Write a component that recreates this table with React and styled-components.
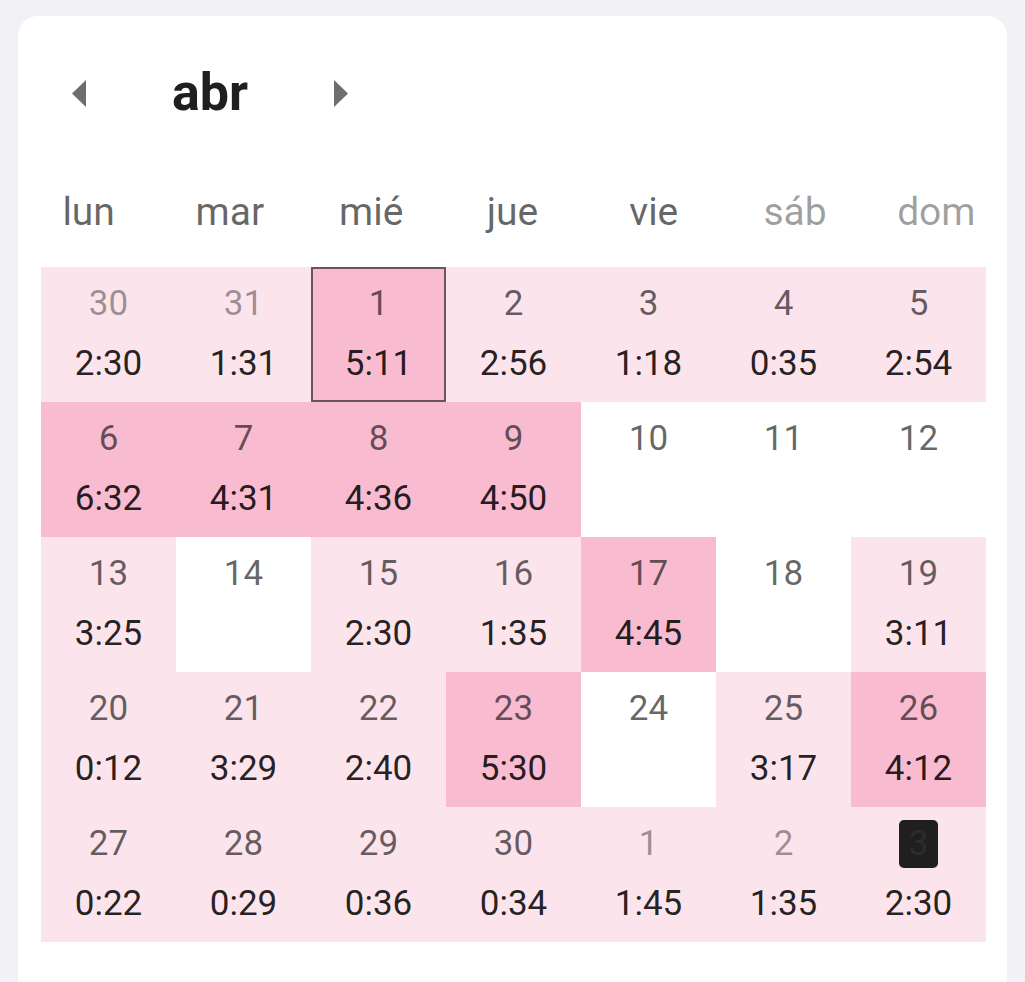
import React from "react";
import styled, { createGlobalStyle } from "styled-components";

const GlobalStyle = createGlobalStyle`
  html, body {
    margin: 0;
    padding: 0;
    background: #f2f1f6;
    overflow: hidden;
  }
  body {
    font-family: Roboto, "Noto Sans", "Liberation Sans", sans-serif;
  }
`;

const Page = styled.div`
  padding: 16px 18px 0 18px;
  height: 982px;
  box-sizing: border-box;
`;

const Card = styled.div`
  background: #ffffff;
  border-radius: 20px 20px 0 0;
  height: 100%;
  padding-top: 37px;
  box-sizing: border-box;
`;

const Header = styled.div`
  display: flex;
  align-items: center;
  height: 80px;
  padding-left: 31px;
`;

const NavButton = styled.button`
  width: 60px;
  height: 60px;
  border: none;
  background: transparent;
  padding: 0;
  display: flex;
  align-items: center;
  justify-content: center;
  cursor: pointer;
`;

const Title = styled.div`
  width: 202px;
  text-align: center;
  font-size: 52px;
  font-weight: 700;
  color: #1f1f1f;
  line-height: 60px;
`;

const WeekRow = styled.div`
  display: grid;
  grid-template-columns: repeat(7, 1fr);
  height: 80px;
  margin-top: 39px;
  align-items: center;
`;

const WeekDay = styled.div`
  text-align: center;
  font-size: 39px;
  color: ${(p) => (p.$weekend ? "rgba(0,0,0,0.38)" : "rgba(0,0,0,0.6)")};
`;

const Grid = styled.div`
  display: grid;
  grid-template-columns: repeat(7, 135px);
  grid-auto-rows: 135px;
  margin-top: 15px;
  padding-left: 23px;
`;

const bgFor = {
  light: "#fce4ec",
  dark: "#f8bbd0",
  none: "#ffffff",
};

const Cell = styled.div`
  background: ${(p) => bgFor[p.$level]};
  box-shadow: ${(p) => (p.$selected ? "inset 0 0 0 2px #6b5460" : "none")};
  display: flex;
  flex-direction: column;
  align-items: center;
  padding-top: 17px;
  box-sizing: border-box;
  font-size: 35px;
`;

const DayNum = styled.div`
  height: 40px;
  line-height: 40px;
  display: flex;
  align-items: center;
  justify-content: center;
  color: ${(p) => (p.$other ? "rgba(0,0,0,0.38)" : "rgba(0,0,0,0.6)")};
`;

const TodayBox = styled.span`
  width: 39px;
  height: 48px;
  border-radius: 5px;
  background: #1f1f1f;
  color: #2c2c2c;
  display: flex;
  align-items: center;
  justify-content: center;
  flex-shrink: 0;
`;

const Time = styled.div`
  margin-top: 20px;
  height: 40px;
  line-height: 40px;
  color: rgba(0,0,0,0.87);
`;

const Triangle = ({ dir }) => (
  <svg width="14" height="27" viewBox="0 0 14 27">
    {dir === "left" ? (
      <polygon points="14,0 14,27 0,13.5" fill="#6e6e6e" />
    ) : (
      <polygon points="0,0 0,27 14,13.5" fill="#6e6e6e" />
    )}
  </svg>
);

const weekDays = ["lun", "mar", "mié", "jue", "vie", "sáb", "dom"];

const days = [
  { d: 30, t: "2:30", l: "light", o: true },
  { d: 31, t: "1:31", l: "light", o: true },
  { d: 1, t: "5:11", l: "dark", s: true },
  { d: 2, t: "2:56", l: "light" },
  { d: 3, t: "1:18", l: "light" },
  { d: 4, t: "0:35", l: "light" },
  { d: 5, t: "2:54", l: "light" },
  { d: 6, t: "6:32", l: "dark" },
  { d: 7, t: "4:31", l: "dark" },
  { d: 8, t: "4:36", l: "dark" },
  { d: 9, t: "4:50", l: "dark" },
  { d: 10, l: "none" },
  { d: 11, l: "none" },
  { d: 12, l: "none" },
  { d: 13, t: "3:25", l: "light" },
  { d: 14, l: "none" },
  { d: 15, t: "2:30", l: "light" },
  { d: 16, t: "1:35", l: "light" },
  { d: 17, t: "4:45", l: "dark" },
  { d: 18, l: "none" },
  { d: 19, t: "3:11", l: "light" },
  { d: 20, t: "0:12", l: "light" },
  { d: 21, t: "3:29", l: "light" },
  { d: 22, t: "2:40", l: "light" },
  { d: 23, t: "5:30", l: "dark" },
  { d: 24, l: "none" },
  { d: 25, t: "3:17", l: "light" },
  { d: 26, t: "4:12", l: "dark" },
  { d: 27, t: "0:22", l: "light" },
  { d: 28, t: "0:29", l: "light" },
  { d: 29, t: "0:36", l: "light" },
  { d: 30, t: "0:34", l: "light" },
  { d: 1, t: "1:45", l: "light", o: true },
  { d: 2, t: "1:35", l: "light", o: true },
  { d: 3, t: "2:30", l: "light", today: true },
];

export default function App() {
  return (
    <>
      <GlobalStyle />
      <Page>
        <Card>
          <Header>
            <NavButton aria-label="anterior">
              <Triangle dir="left" />
            </NavButton>
            <Title>abr</Title>
            <NavButton aria-label="siguiente">
              <Triangle dir="right" />
            </NavButton>
          </Header>
          <WeekRow>
            {weekDays.map((w, i) => (
              <WeekDay key={w} $weekend={i >= 5}>
                {w}
              </WeekDay>
            ))}
          </WeekRow>
          <Grid>
            {days.map((c, i) => (
              <Cell key={i} $level={c.l} $selected={c.s}>
                <DayNum $other={c.o}>
                  {c.today ? <TodayBox>{c.d}</TodayBox> : c.d}
                </DayNum>
                {c.t && <Time>{c.t}</Time>}
              </Cell>
            ))}
          </Grid>
        </Card>
      </Page>
    </>
  );
}
